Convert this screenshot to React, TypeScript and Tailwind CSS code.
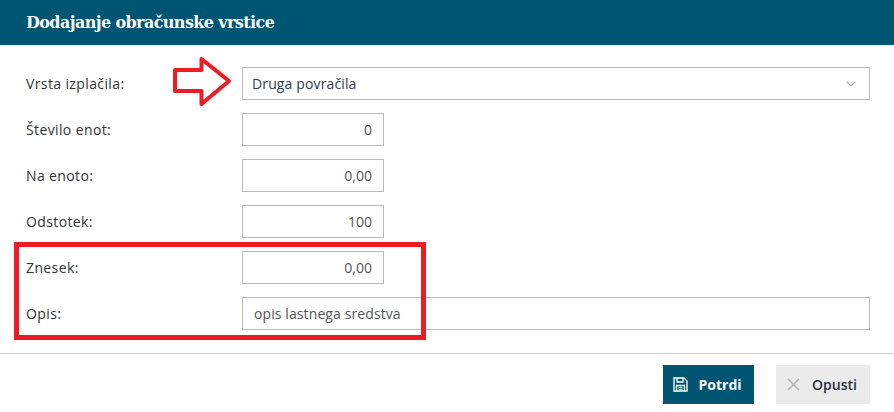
import React from 'react';
import { ChevronDown } from 'lucide-react';

interface RowProps {
  label: string;
  children: React.ReactNode;
}

const Row = ({ label, children }: RowProps) => (
  <div className="flex items-center h-[33px]">
    <label className="w-[216px] shrink-0 text-[14px] font-medium tracking-[0.38px] text-[#333333] -mt-[1px]">{label}</label>
    {children}
  </div>
);

const NumberField = ({ value }: { value: string }) => (
  <input
    readOnly
    value={value}
    className="w-[142px] h-[33px] border border-[#bbbbbb] bg-white pl-3 pr-[11px] text-right text-[14px] text-[#555555] outline-none"
  />
);

const SaveIcon = () => (
  <svg width="15" height="15" viewBox="0 0 15 15" fill="none" stroke="white" strokeWidth="1.3">
    <path d="M1 1h10l3 3v10H1z" />
    <path d="M4 1v4h6V1" />
    <path d="M3.5 14V8.5h8V14" />
    <path d="M5.5 10.5h4M5.5 12.3h4" strokeWidth="1" />
  </svg>
);

const CloseIcon = () => (
  <svg width="13" height="13" viewBox="0 0 13 13" fill="none" stroke="#b3b3b3" strokeWidth="1.6">
    <path d="M1 1l11 11M12 1L1 12" />
  </svg>
);

// Red annotations drawn over the dialog
const Arrow = () => (
  <svg className="absolute left-[172px] top-[56px]" width="60" height="52" viewBox="0 0 60 52" fill="none">
    <path
      d="M3 14H29.5V3L57 25L29.5 48V35H3Z"
      stroke="#ed1c24"
      strokeWidth="4"
      strokeLinejoin="round"
    />
  </svg>
);

export default function App() {
  return (
    <div className="relative w-[894px] h-[412px] overflow-hidden bg-white font-['Open_Sans',sans-serif]">
      <header className="flex items-center h-[45px] px-[26px] bg-[#005672]">
        <h1 className="text-[16px] font-bold text-white font-['DejaVu_Serif',serif] tracking-[-0.6px]">
          Dodajanje obračunske vrstice
        </h1>
      </header>

      <div className="flex flex-col gap-[13px] pt-[22px] pl-[26px] pr-[24px] h-[309px] border-b border-[#d4d4d4]">
        <Row label="Vrsta izplačila:">
          <div className="flex flex-1 items-center justify-between h-[33px] border border-[#bbbbbb] pl-[10px] pr-[10px] text-[14px] text-[#2f3b55]">
            <span className="-ml-[1px] tracking-[0.13px]">Druga povračila</span>
            <ChevronDown size={16} strokeWidth={1.6} className="text-[#b0b0b0]" />
          </div>
        </Row>
        <Row label="Število enot:">
          <NumberField value="0" />
        </Row>
        <Row label="Na enoto:">
          <NumberField value="0,00" />
        </Row>
        <Row label="Odstotek:">
          <NumberField value="100" />
        </Row>
        <Row label="Znesek:">
          <NumberField value="0,00" />
        </Row>
        <Row label="Opis:">
          <input
            readOnly
            value="opis lastnega sredstva"
            className="flex-1 h-[33px] border border-[#bbbbbb] px-[11px] text-[14px] tracking-[0.1px] text-[#555555] outline-none"
          />
        </Row>
      </div>

      <footer className="flex justify-end gap-[22px] pt-[11px] pr-[24px]">
        <button className="flex items-center justify-center gap-[10px] w-[91px] h-[39px] pr-[2px] bg-[#005672] text-[14px] font-bold text-white">
          <SaveIcon />
          Potrdi
        </button>
        <button className="flex items-center justify-center gap-[12px] w-[94px] h-[39px] pr-[2px] bg-[#ebebeb] text-[14px] font-semibold text-[#2a3145]">
          <CloseIcon />
          Opusti
        </button>
      </footer>

      <Arrow />
      <div className="absolute left-[14px] top-[242px] w-[412px] h-[98px] border-[5px] border-[#ed1c24]" />
    </div>
  );
}
